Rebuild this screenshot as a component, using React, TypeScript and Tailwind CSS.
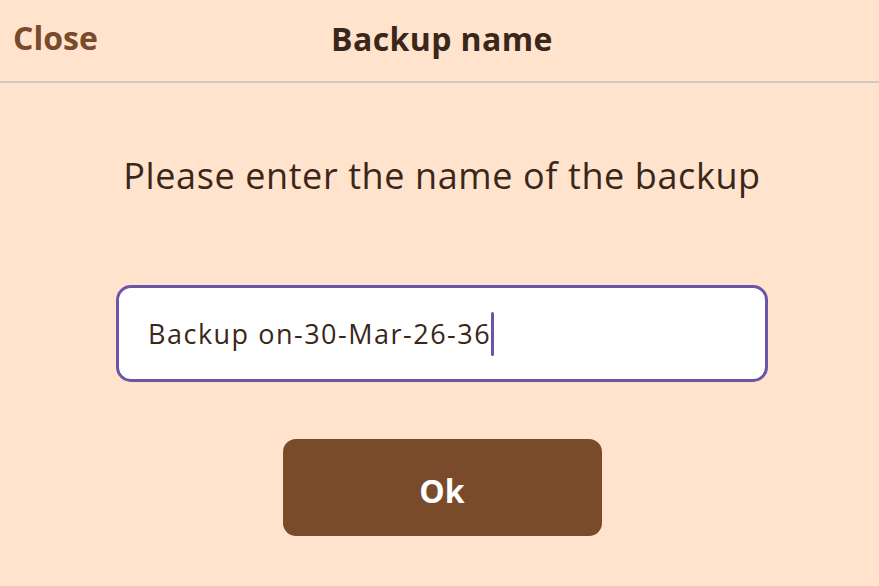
import React from "react";

export default function App() {
  return (
    <div
      className="w-[879px] h-[586px] bg-[#ffe3cd] overflow-hidden"
      style={{ fontFamily: '"Open Sans", "Noto Sans", sans-serif' }}
    >
      <div className="relative h-[83px] border-b-2 border-[#d3c9c1] flex items-center justify-center pl-[5px]">
        <button className="absolute left-[13px] top-[18px] text-[32px] font-bold text-[#7a4b2a] leading-[40px]">
          Close
        </button>
        <div className="text-[32px] font-bold text-[#3b2719] tracking-[0.4px] leading-[40px] -mt-[4px]">
          Backup name
        </div>
      </div>
      <div className="flex flex-col items-center pl-[116px] pr-[111px]">
        <div className="mt-[68px] text-[36px] text-[#3b2719] tracking-[0.6px] leading-[50px]">
          Please enter the name of the backup
        </div>
        <div className="mt-[84px] w-full h-[97px] bg-white border-[3px] border-[#6a55a7] rounded-[15px] flex items-center pl-[29px]">
          <span className="text-[27px] text-[#3b2719] tracking-[1.5px] leading-[36px]">
            Backup on-30-Mar-26-36
          </span>
          <span className="w-[3px] h-[44px] bg-[#6a55a7] rounded-[1.5px]" />
        </div>
        <button className="mt-[57px] w-[319px] h-[97px] pt-[7px] rounded-[13px] bg-[#7a4b2a] text-white text-[32px] font-bold">
          Ok
        </button>
      </div>
    </div>
  );
}
